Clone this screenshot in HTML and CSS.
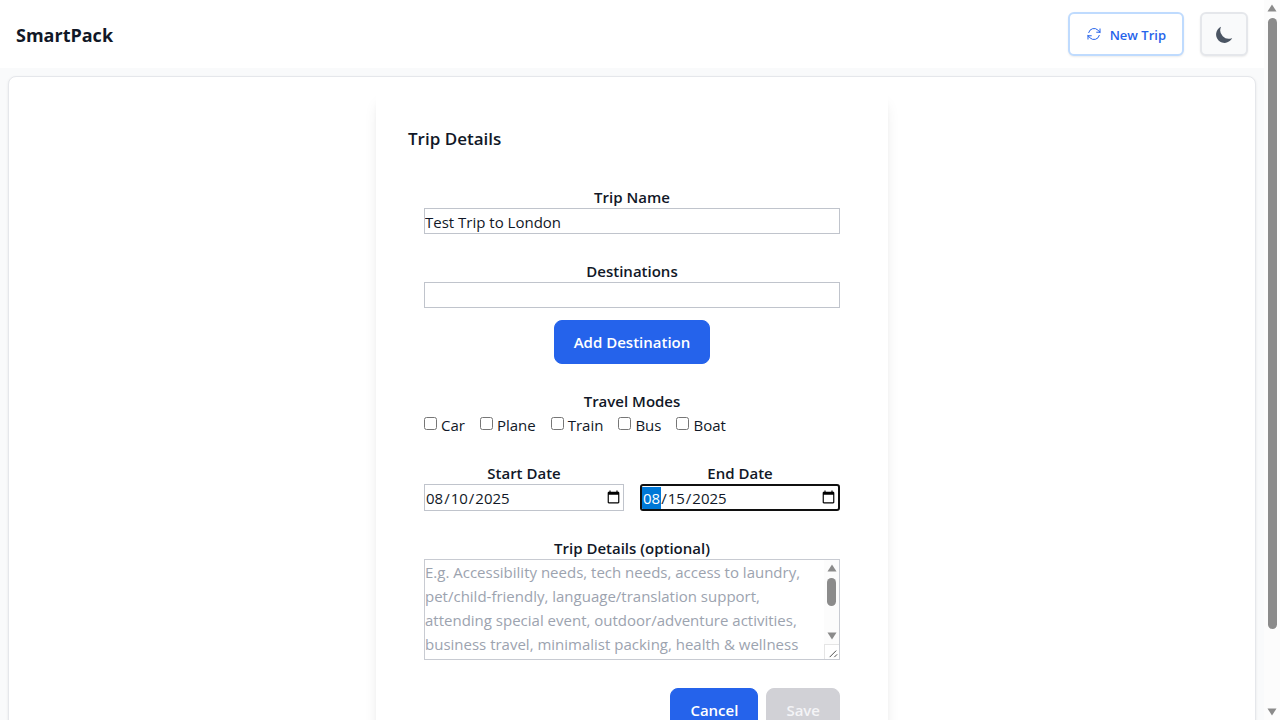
FILE: index.html
```html
<!DOCTYPE html>
<html lang="en">
<head>
<meta charset="utf-8">
<meta name="viewport" content="width=device-width, initial-scale=1">
<title>SmartPack</title>
<link rel="stylesheet" href="styles.css">
</head>
<body>
<div class="app">
  <div class="page">
    <header class="header">
      <h1 class="brand">SmartPack</h1>
      <div class="header-actions">
        <button class="new-trip" type="button">
          <svg class="refresh-icon" viewBox="0 0 24 24" fill="none" stroke="currentColor" stroke-width="1.5" stroke-linecap="round" stroke-linejoin="round" aria-hidden="true"><path d="M16.023 9.348h4.992v-.001M2.985 19.644v-4.992m0 0h4.992m-4.993 0 3.181 3.183a8.25 8.25 0 0 0 13.803-3.7M4.031 9.865a8.25 8.25 0 0 1 13.803-3.7l3.181 3.182m0-4.991v4.99"/></svg>
          <span>New Trip</span>
        </button>
        <button class="theme-toggle" type="button" aria-label="Toggle dark mode">
          <svg class="moon-icon" viewBox="0 0 20 20" fill="currentColor" aria-hidden="true"><path d="M17.293 13.293A8 8 0 0 1 6.707 2.707a8.001 8.001 0 1 0 10.586 10.586z"/></svg>
        </button>
      </div>
    </header>
    <main class="main">
      <form class="trip-form">
        <h2 class="form-title">Trip Details</h2>
        <div class="fields">
          <div class="field">
            <label class="label" for="trip-name">Trip Name</label>
            <input class="input" id="trip-name" type="text" value="Test Trip to London">
          </div>
          <div class="field">
            <label class="label" for="destination">Destinations</label>
            <input class="input" id="destination" type="text">
            <button class="button button-add" type="button">Add Destination</button>
          </div>
          <fieldset class="field modes">
            <legend class="label">Travel Modes</legend>
            <div class="mode-list">
              <label class="mode"><input class="check" type="checkbox">Car</label>
              <label class="mode"><input class="check" type="checkbox">Plane</label>
              <label class="mode"><input class="check" type="checkbox">Train</label>
              <label class="mode"><input class="check" type="checkbox">Bus</label>
              <label class="mode"><input class="check" type="checkbox">Boat</label>
            </div>
          </fieldset>
          <div class="dates">
            <div class="field">
              <label class="label" for="start-date">Start Date</label>
              <input class="input date" id="start-date" type="date" value="2025-08-10">
            </div>
            <div class="field">
              <label class="label" for="end-date">End Date</label>
              <input class="input date date-active" id="end-date" type="date" value="2025-08-15">
            </div>
          </div>
          <div class="field">
            <label class="label" for="details">Trip Details (optional)</label>
            <div class="details-box">
              <textarea class="details" id="details" placeholder="E.g. Accessibility needs, tech needs, access to laundry, pet/child-friendly, language/translation support, attending special event, outdoor/adventure activities, business travel, minimalist packing, health &amp; wellness"></textarea>
              <div class="details-side" aria-hidden="true">
                <div class="scrollbar">
                  <svg class="arrow" viewBox="0 0 10 8"><path d="M5 .5 9.5 7.5H.5z"/></svg>
                  <div class="track"><div class="thumb thumb-small"></div></div>
                  <svg class="arrow" viewBox="0 0 10 8"><path d="M5 7.5.5.5h9z"/></svg>
                </div>
                <svg class="grip" viewBox="0 0 15 15"><path d="M5 13l7-7M10 13l3-3"/></svg>
              </div>
            </div>
          </div>
          <div class="form-actions">
            <button class="button" type="button">Cancel</button>
            <button class="button" type="submit" disabled>Save</button>
          </div>
        </div>
      </form>
    </main>
  </div>
  <div class="scrollbar page-scrollbar" aria-hidden="true">
    <svg class="arrow" viewBox="0 0 10 8"><path d="M5 .5 9.5 7.5H.5z"/></svg>
    <div class="track"><div class="thumb thumb-page"></div></div>
    <svg class="arrow" viewBox="0 0 10 8"><path d="M5 7.5.5.5h9z"/></svg>
  </div>
</div>
</body>
</html>
```

FILE: styles.css
```css
* {
  box-sizing: border-box;
}

body {
  margin: 0;
  background: #f9fafb;
  color: #111827;
  font: 15px/24px "Segoe UI", "Open Sans", "Noto Sans", sans-serif;
}

button,
input,
textarea {
  font: inherit;
  color: inherit;
}

.app {
  display: flex;
  height: 100vh;
}

.page {
  flex: 1;
  min-width: 0;
  overflow-y: auto;
  scrollbar-width: none;
}

.header {
  display: flex;
  align-items: center;
  justify-content: space-between;
  padding: 12px 16px;
  background: #fff;
}

.brand {
  margin: 0;
  padding-top: 2px;
  font-size: 18px;
  line-height: 28px;
  font-weight: 700;
}

.header-actions {
  display: flex;
  gap: 16px;
}

.new-trip,
.theme-toggle {
  display: flex;
  align-items: center;
  justify-content: center;
  height: 44px;
  border-radius: 6px;
  box-shadow: 0 1px 2px rgba(0, 0, 0, 0.08);
}

.new-trip {
  gap: 8px;
  padding: 0 16px;
  border: 2px solid #bfdbfe;
  background: #fff;
  color: #2563eb;
  font-size: 13px;
  font-weight: 600;
}

.new-trip span {
  padding-top: 2px;
}

.theme-toggle {
  width: 48px;
  padding: 0;
  border: 2px solid #e5e7eb;
  background: #f9fafb;
  color: #4b5563;
}

.refresh-icon {
  width: 16px;
  height: 16px;
}

.moon-icon {
  width: 21px;
  height: 21px;
}

.main {
  margin: 8px;
  padding: 15px;
  border: 1px solid #e5e7eb;
  border-radius: 8px;
  background: #fff;
  box-shadow: 0 1px 3px rgba(0, 0, 0, 0.08);
}

.trip-form {
  max-width: 512px;
  margin: 0 auto;
  padding: 32px;
  border-radius: 8px;
  box-shadow: 0 10px 15px -3px rgba(0, 0, 0, 0.1), 0 4px 6px -4px rgba(0, 0, 0, 0.1);
}

.form-title {
  margin: 0 0 14px;
  font-size: 17px;
  line-height: 30px;
  font-weight: 600;
}

.fields {
  display: flex;
  flex-direction: column;
  gap: 24px;
  padding: 16px;
}

.field {
  display: flex;
  flex-direction: column;
  min-width: 0;
}

.label {
  padding: 2px 0 0;
  line-height: 22px;
  text-align: center;
  font-weight: 600;
}

.input {
  width: 100%;
  height: 26px;
  padding: 1px 0 0;
  border: 1px solid #c0c4cc;
  border-radius: 0;
  background: #fff;
}

.button {
  height: 44px;
  padding: 0 19px;
  border: 1px solid #2563eb;
  border-radius: 8px;
  background: #2563eb;
  color: #fff;
  font-weight: 600;
}

.button:disabled {
  border-color: #d1d1d6;
  background: #d1d1d6;
  color: #f4f4f6;
}

.button-add {
  align-self: center;
  margin-top: 12px;
}

.modes {
  display: block;
  margin: 0;
  padding: 0;
  border: 0;
}

.modes .label {
  width: 100%;
}

.mode-list {
  display: flex;
  flex-wrap: wrap;
  gap: 0 15px;
}

.mode {
  display: flex;
  align-items: center;
  gap: 4px;
  line-height: 22px;
  padding-top: 2px;
}

.check {
  width: 13px;
  height: 13px;
  margin: 0 0 4px;
}

.dates {
  display: grid;
  grid-template-columns: 1fr 1fr;
  gap: 16px;
}

.date {
  height: 27px;
  padding: 0;
}

.date::-webkit-datetime-edit,
.date::-webkit-datetime-edit-fields-wrapper {
  padding: 0;
}

.date-active {
  border: 2px solid #101010;
  border-radius: 3px;
}

.date-active::-webkit-datetime-edit-month-field {
  background: #0078d7;
  color: #fff;
}

.details-box {
  display: flex;
  height: 101px;
  border: 1px solid #c8cbd2;
}

.details {
  flex: 1;
  min-width: 0;
  padding: 0;
  border: 0;
  outline: 0;
  resize: none;
  overflow: hidden;
  background: #fff;
}

.details::placeholder {
  color: #9ca3af;
}

.details-side {
  display: flex;
  flex-direction: column;
  width: 15px;
}

.scrollbar {
  display: flex;
  flex: 1;
  flex-direction: column;
  align-items: center;
  padding: 4px 0;
  background: #fcfcfc;
}

.page-scrollbar {
  flex: none;
  width: 16px;
}

.arrow {
  width: 10px;
  height: 8px;
  fill: #8b8b8b;
}

.track {
  flex: 1;
  width: 9px;
  padding: 6px 0;
}

.thumb {
  border-radius: 5px;
  background: #8b8b8b;
}

.thumb-small {
  height: 28px;
}

.thumb-page {
  height: 89.4%;
}

.grip {
  width: 15px;
  height: 15px;
  border: solid #e5e5e5;
  border-width: 1px 0 0 1px;
  fill: none;
  stroke: #444;
}

.form-actions {
  display: flex;
  justify-content: flex-end;
  gap: 8px;
  padding-top: 4px;
}
```
